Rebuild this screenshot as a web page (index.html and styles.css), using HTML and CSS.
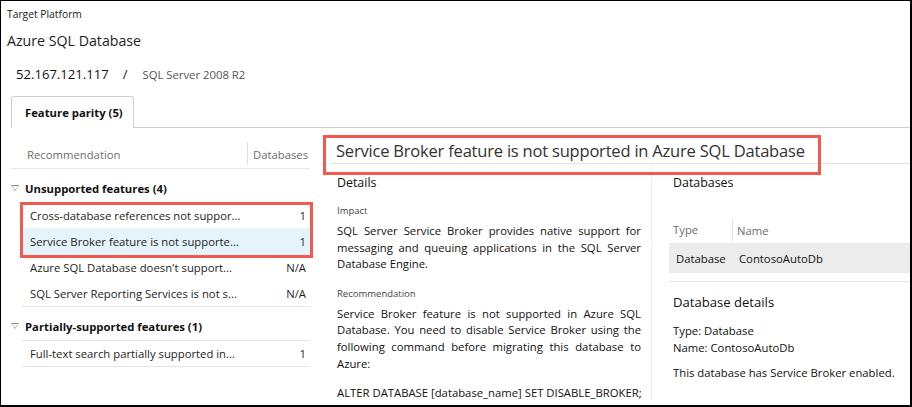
FILE: index.html
```html
<!DOCTYPE html>
<html>
<head>
<meta charset="utf-8">
<link rel="stylesheet" href="styles.css">
</head>
<body>
<div class="frame">
  <header class="top">
    <div class="label">Target Platform</div>
    <div class="platform">Azure SQL Database</div>
    <div class="server">
      <span class="ip">52.167.121.117</span>
      <span class="slash">/</span>
      <span class="ver">SQL Server 2008 R2</span>
    </div>
  </header>
  <div class="tabs">
    <div class="tab">Feature parity (5)</div>
    <div class="tab-rest"></div>
  </div>
  <div class="main">
    <section class="left">
      <div class="list-head">
        <div class="col-rec">Recommendation</div>
        <div class="col-db">Databases</div>
      </div>
      <div class="group">
        <div class="group-head"><span class="tri"></span>Unsupported features (4)</div>
        <div class="highlight">
          <div class="row"><span class="name">Cross-database references not suppor...</span><span class="val">1</span></div>
          <div class="row selected"><span class="name">Service Broker feature is not supporte...</span><span class="val">1</span></div>
        </div>
        <div class="row"><span class="name">Azure SQL Database doesn't support...</span><span class="val">N/A</span></div>
        <div class="row last"><span class="name">SQL Server Reporting Services is not s...</span><span class="val">N/A</span></div>
      </div>
      <div class="group">
        <div class="group-head bordered"><span class="tri"></span>Partially-supported features (1)</div>
        <div class="row last"><span class="name">Full-text search partially supported in...</span><span class="val">1</span></div>
      </div>
    </section>
    <section class="right">
      <div class="title-wrap">
        <h1 class="title">Service Broker feature is not supported in Azure SQL Database</h1>
      </div>
      <div class="cols">
        <div class="details">
          <h2 class="sec">Details</h2>
          <div class="small">Impact</div>
          <p class="para">SQL Server Service Broker provides native support for messaging and queuing applications in the SQL Server Database Engine.</p>
          <div class="small rec">Recommendation</div>
          <p class="para">Service Broker feature is not supported in Azure SQL Database. You need to disable Service Broker using the following command before migrating this database to Azure:</p>
          <p class="para cmd">ALTER DATABASE [database_name] SET DISABLE_BROKER;</p>
        </div>
        <div class="dbs">
          <h2 class="sec">Databases</h2>
          <div class="db-head">
            <div class="c-type">Type</div>
            <div class="c-name">Name</div>
          </div>
          <div class="db-row">
            <div class="c-type">Database</div>
            <div class="c-name">ContosoAutoDb</div>
          </div>
          <div class="db-details">
            <h3 class="sub">Database details</h3>
            <div class="kv first">Type: Database</div>
            <div class="kv">Name: ContosoAutoDb</div>
            <div class="kv note">This database has Service Broker enabled.</div>
          </div>
        </div>
      </div>
    </section>
  </div>
</div>
</body>
</html>
```
FILE: styles.css
```css
* { box-sizing: border-box; margin: 0; padding: 0; }
html, body { width: 912px; height: 407px; overflow: hidden; background: #fff; }
body {
  font-family: "Open Sans", "Noto Sans", sans-serif;
  color: #1e1e1e;
  font-size: 11.3px;
}
.frame {
  width: 912px;
  height: 407px;
  border-top: 1px solid #000;
  border-left: 1px solid #000;
  border-right: 2px solid #000;
  border-bottom: 2px solid #000;
  overflow: hidden;
}
.top { padding: 5px 0 0 6px; }
.label { font-size: 10.3px; line-height: 16px; color: #222; }
.platform { font-size: 14.2px; line-height: 20px; margin-top: 9px; color: #1e1e1e; }
.server { display: flex; align-items: baseline; margin-top: 14px; padding-left: 9px; height: 20px; }
.ip { font-size: 13.1px; color: #111; }
.slash { font-size: 13.1px; margin: 0 15px 0 14px; color: #222; }
.ver { font-size: 11.3px; color: #555; }

.tabs { display: flex; margin-top: 11px; height: 32px; }
.tab {
  margin-left: 10px;
  width: 123px;
  height: 32px;
  border: 1px solid #d0d0d0;
  border-bottom: none;
  border-radius: 3px 3px 0 0;
  font-weight: 700;
  font-size: 11.3px;
  line-height: 31px;
  padding-left: 13px;
  color: #111;
}
.tab-rest { flex: 1; border-bottom: 1px solid #cfcfcf; }

.main { display: flex; }
.left { width: 299px; margin-left: 10px; margin-top: 14px; }
.list-head {
  display: flex;
  height: 27px;
  border-bottom: 1px solid #e6e6e6;
  color: #6e6e6e;
}
.col-rec { width: 236px; padding-left: 16px; line-height: 26px; }
.col-db { flex: 1; border-left: 1px solid #e0e0e0; height: 23px; padding-left: 5px; line-height: 26px; }
.group-head {
  height: 33px;
  padding-top: 5px;
  display: flex;
  align-items: center;
  font-weight: 700;
  color: #111;
}
.group-head.bordered { border-bottom: 1px solid #e6e6e6; height: 34px; margin-left: 11px; }
.group-head.bordered .tri { margin-left: -11px; }
.tri {
  flex: none;
  width: 0; height: 0;
  border-left: 4.5px solid transparent;
  border-right: 4.5px solid transparent;
  border-top: 6px solid #8a8a8a;
  margin: 0 6px 0 0;
  position: relative;
}
.tri::after {
  content: "";
  position: absolute;
  left: -3px; top: -5px;
  border-left: 3px solid transparent;
  border-right: 3px solid transparent;
  border-top: 4px solid #fff;
}
.row {
  margin-left: 11px;
  height: 26.3px;
  display: flex;
  align-items: center;
  justify-content: space-between;
  padding: 0 4px 0 8px;
  color: #1e1e1e;
}
.row.last { border-bottom: 1px solid #e6e6e6; }
.row.selected { background: #e5f3fb; }
.highlight { position: relative; }
.highlight::after {
  content: "";
  position: absolute;
  left: 9px; right: -3px; top: 0; bottom: -3px;
  border: 3px solid #f25a4f;
  pointer-events: none;
}

.right { flex: 1; margin-left: 20px; margin-top: 7px; }
.title-wrap { position: relative; border-bottom: 1px solid #e3e3e3; height: 29px; }
.title {
  font-weight: 400;
  font-size: 16.5px;
  letter-spacing: -0.2px;
  line-height: 28px;
  padding-top: 2px;
  color: #333;
  padding-left: 6px;
  white-space: nowrap;
}
.title-wrap::after {
  content: "";
  position: absolute;
  left: -7px; top: 0; width: 492px; height: 34px;
  border: 3px solid #f25a4f;
  pointer-events: none;
}
.cols { display: flex; }
.details { width: 322px; padding-left: 7px; padding-right: 10px; border-right: 1px solid #efefef; }
.sec { font-weight: 400; font-size: 12.4px; line-height: 20px; margin-top: 9px; color: #111; }
.small { font-size: 9.5px; color: #444; margin-top: 11px; line-height: 14px; }
.small.rec { margin-top: 14px; }
.para {
  line-height: 16.6px;
  text-align: justify;
  margin-top: 5px;
  color: #111;
}
.para.cmd { margin-top: 12.5px; text-align: left; white-space: nowrap; }
.dbs { flex: 1; padding-left: 17px; }
.dbs .sec { padding-left: 4px; }
.db-head { display: flex; height: 26px; margin-top: 24px; color: #6e6e6e; align-items: center; }
.db-head .c-type { width: 64px; padding-left: 4px; border-right: 1px solid #e0e0e0; height: 24px; line-height: 24px; }
.db-head .c-name { padding-left: 4px; }
.db-row { display: flex; height: 30px; background: #ececec; align-items: center; color: #111; }
.db-row .c-type { width: 63px; padding-left: 7px; }
.db-row .c-name { padding-left: 7px; }
.db-details { border-top: 1px solid #e3e3e3; margin-top: 8px; padding-left: 4px; }
.sub { font-weight: 400; font-size: 13.1px; line-height: 20px; margin-top: 10px; color: #111; }
.kv { line-height: 16.5px; color: #111; white-space: nowrap; }
.kv.first { margin-top: 11px; }
.kv.note { margin-top: 9px; }
```
